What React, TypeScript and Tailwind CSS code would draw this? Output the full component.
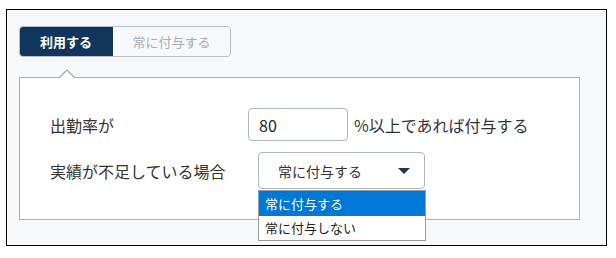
import { useState } from 'react';

const jp = { fontFamily: '"Noto Sans CJK JP", "Noto Sans", sans-serif' };

const options = ['常に付与する', '常に付与しない'];

export default function App() {
  const [tab, setTab] = useState(0);
  const [rate, setRate] = useState('80');
  const [selected, setSelected] = useState(0);

  return (
    <div className="w-[616px] h-[258px] bg-white pt-[9px] pl-[6px]" style={jp}>
      <div className="w-[601px] h-[237px] border border-black bg-[#f7f8fa] pt-[16px] pl-[12px]">
        {/* タブ */}
        <div className="flex w-[212px] h-[31px] rounded-[4px] border border-[#b9bfc6] overflow-hidden">
          <button
            type="button"
            onClick={() => setTab(0)}
            className={
              tab === 0
                ? 'w-[94px] -my-px -ml-px bg-[#12355b] text-white text-[13px] font-bold'
                : 'w-[94px] bg-white text-[#a8acb1] text-[13px]'
            }
          >
            利用する
          </button>
          <button
            type="button"
            onClick={() => setTab(1)}
            className={
              tab === 1
                ? 'flex-1 bg-[#12355b] text-white text-[13px] font-bold'
                : 'flex-1 bg-[#f7f8fa] text-[#a8acb1] text-[13px]'
            }
          >
            常に付与する
          </button>
        </div>

        {/* パネル */}
        <div className="relative mt-[20px] w-[561px] h-[143px] border border-[#aab1b8] bg-white pt-[30px] pl-[30px]">
          <div className="absolute left-[38px] -top-[9px] w-0 h-0 border-l-[9px] border-r-[9px] border-b-[9px] border-l-transparent border-r-transparent border-b-[#aab1b8]" />
          <div className="absolute left-[39px] -top-[7px] w-0 h-0 border-l-[8px] border-r-[8px] border-b-[8px] border-l-transparent border-r-transparent border-b-white" />

          <div className="flex items-center h-[33px]">
            <span className="w-[198px] text-[16px] leading-[20px] text-[#333]">出勤率が</span>
            <input
              value={rate}
              onChange={(e) => setRate(e.target.value)}
              className="w-[100px] h-[33px] rounded-[4px] border border-[#aeb7c1] px-[10px] text-[16px] text-[#222] outline-none"
            />
            <span className="ml-[6px] text-[16px] leading-[20px] text-[#333]">%以上であれば付与する</span>
          </div>

          <div className="flex items-center h-[37px] mt-[11px]">
            <span className="w-[208px] text-[16px] leading-[20px] text-[#333]">実績が不足している場合</span>
            <div className="relative">
              <div className="flex items-center justify-between w-[167px] h-[37px] rounded-[4px] border border-[#aeb7c1] bg-white pl-[19px] pr-[14px]">
                <span className="text-[14px] leading-[18px] text-[#333]">{options[selected]}</span>
                <span className="w-0 h-0 border-l-[6px] border-r-[6px] border-t-[6px] border-l-transparent border-r-transparent border-t-[#1d3550]" />
              </div>
              <ul className="absolute left-0 top-[38px] w-[168px] border border-[#9a9a9a] bg-white">
                {options.map((o, i) => (
                  <li
                    key={o}
                    onClick={() => setSelected(i)}
                    className={
                      i === selected
                        ? 'h-[25px] flex items-center pl-[6px] bg-[#0078d7] text-white text-[13px]'
                        : 'h-[24px] flex items-center pl-[6px] text-[#222] text-[13px]'
                    }
                  >
                    {o}
                  </li>
                ))}
              </ul>
            </div>
          </div>
        </div>
      </div>
    </div>
  );
}
